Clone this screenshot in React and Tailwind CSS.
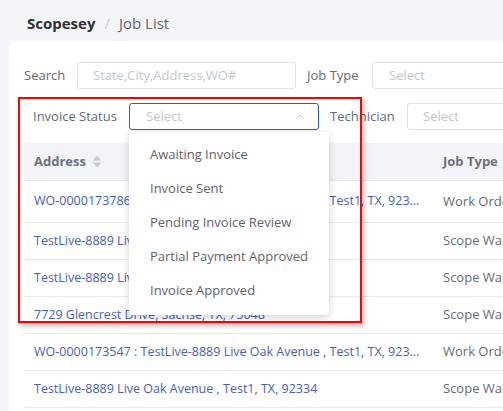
import { ChevronUp } from 'lucide-react';

const rows = [
    { address: 'WO-0000173786 : TestLive-8889 Live Oak Avenue , Test1, TX, 923...', type: 'Work Order', h: 'h-[42px]' },
    { address: 'TestLive-8889 Live Oak Avenue , Test1, TX, 92334', type: 'Scope Walk', h: 'h-[37px]' },
    { address: 'TestLive-8889 Live Oak Avenue , Test1, TX, 92334', type: 'Scope Walk', h: 'h-[37px]' },
    { address: '7729 Glencrest Drive, Sachse, TX, 75048', type: 'Scope Walk', h: 'h-[37px]' },
    { address: 'WO-0000173547 : TestLive-8889 Live Oak Avenue , Test1, TX, 923...', type: 'Work Order', h: 'h-[37px]' },
    { address: 'TestLive-8889 Live Oak Avenue , Test1, TX, 92334', type: 'Scope Walk', h: 'h-[37px]' },
];

const statuses = ['Awaiting Invoice', 'Invoice Sent', 'Pending Invoice Review', 'Partial Payment Approved', 'Invoice Approved'];

function SortIcon() {
    return (
        <svg width="10" height="13" viewBox="0 0 10 13" className="ml-[6px]">
            <path d="M5 0.5 L9.5 5.5 H0.5 Z" fill="#c9ccd3" />
            <path d="M5 12.5 L9.5 7.5 H0.5 Z" fill="#c9ccd3" />
        </svg>
    );
}

export default function App() {
    return (
        <div className="relative w-[503px] h-[411px] overflow-hidden bg-[#f4f5f9] text-[13px] text-[#666b75]" style={{ fontFamily: '"Open Sans", "Liberation Sans", sans-serif' }}>
            <div className="h-[41px] pl-[27px] pt-[5px] flex items-center gap-[9px] text-[15px]">
                <span className="font-bold text-[#2e3033]">Scopesey</span>
                <span className="text-[#c9cbd0]">/</span>
                <span className="text-[#5f636b]">Job List</span>
            </div>

            <div className="ml-[9px] w-[700px] h-[400px] bg-white rounded-tl-[5px] pt-[21px] pl-[15px]">
                <div className="flex items-center h-[27px]">
                    <span className="w-[53px]">Search</span>
                    <div className="w-[219px] h-[27px] border border-[#dfe1e6] rounded-[3px] flex items-center pl-[15px] text-[#c3c6cc]">State,City,Address,WO#</div>
                    <span className="ml-[11px] w-[65px]">Job Type</span>
                    <div className="w-[200px] h-[27px] border border-[#dfe1e6] rounded-[3px] flex items-center pl-[16px] text-[#c3c6cc]">Select</div>
                </div>

                <div className="flex items-center h-[27px] mt-[14px] pl-[9px]">
                    <span className="w-[96px]">Invoice Status</span>
                    <div className="relative">
                        <div className="w-[190px] h-[27px] border border-[#2a5fc1] rounded-[3px] flex items-center justify-between pl-[16px] pr-[11px] text-[#c3c6cc]">
                            Select
                            <ChevronUp size={14} strokeWidth={1.5} className="text-[#b8bcc4]" />
                        </div>
                        <div className="absolute left-0 top-[29px] z-10 w-[200px] h-[183px] bg-white rounded-[3px] shadow-[0_2px_8px_rgba(0,0,0,0.18)] py-[6px] text-[#5f636b]">
                            {statuses.map((s) => (
                                <div key={s} className="h-[34px] flex items-center pl-[21px]">{s}</div>
                            ))}
                        </div>
                    </div>
                    <span className="ml-[11px] w-[77px]">Technician</span>
                    <div className="w-[200px] h-[27px] border border-[#dfe1e6] rounded-[3px] flex items-center pl-[15px] text-[#c3c6cc]">Select</div>
                </div>

                <div className="mt-[13px]">
                    <div className="flex h-[38px] bg-[#f3f4f8] border-b border-[#e8e9ee] font-bold text-[#6d717a] items-center">
                        <div className="w-[419px] pl-[10px] flex items-center">Address<SortIcon /></div>
                        <div>Job Type</div>
                    </div>
                    {rows.map((r, i) => (
                        <div key={i} className={`flex items-center border-b border-[#e8e9ee] text-[12.5px] ${r.h}`}>
                            <div className="w-[419px] pl-[10px] text-[#4461b8] whitespace-nowrap overflow-hidden">{r.address}</div>
                            <div className="whitespace-nowrap text-[13px]">{r.type}</div>
                        </div>
                    ))}
                </div>
            </div>

            <div className="absolute left-[18px] top-[97px] w-[344px] h-[226px] border-2 border-[#ff0000] shadow-[2px_3px_5px_rgba(0,0,0,0.25)] pointer-events-none" />
        </div>
    );
}
